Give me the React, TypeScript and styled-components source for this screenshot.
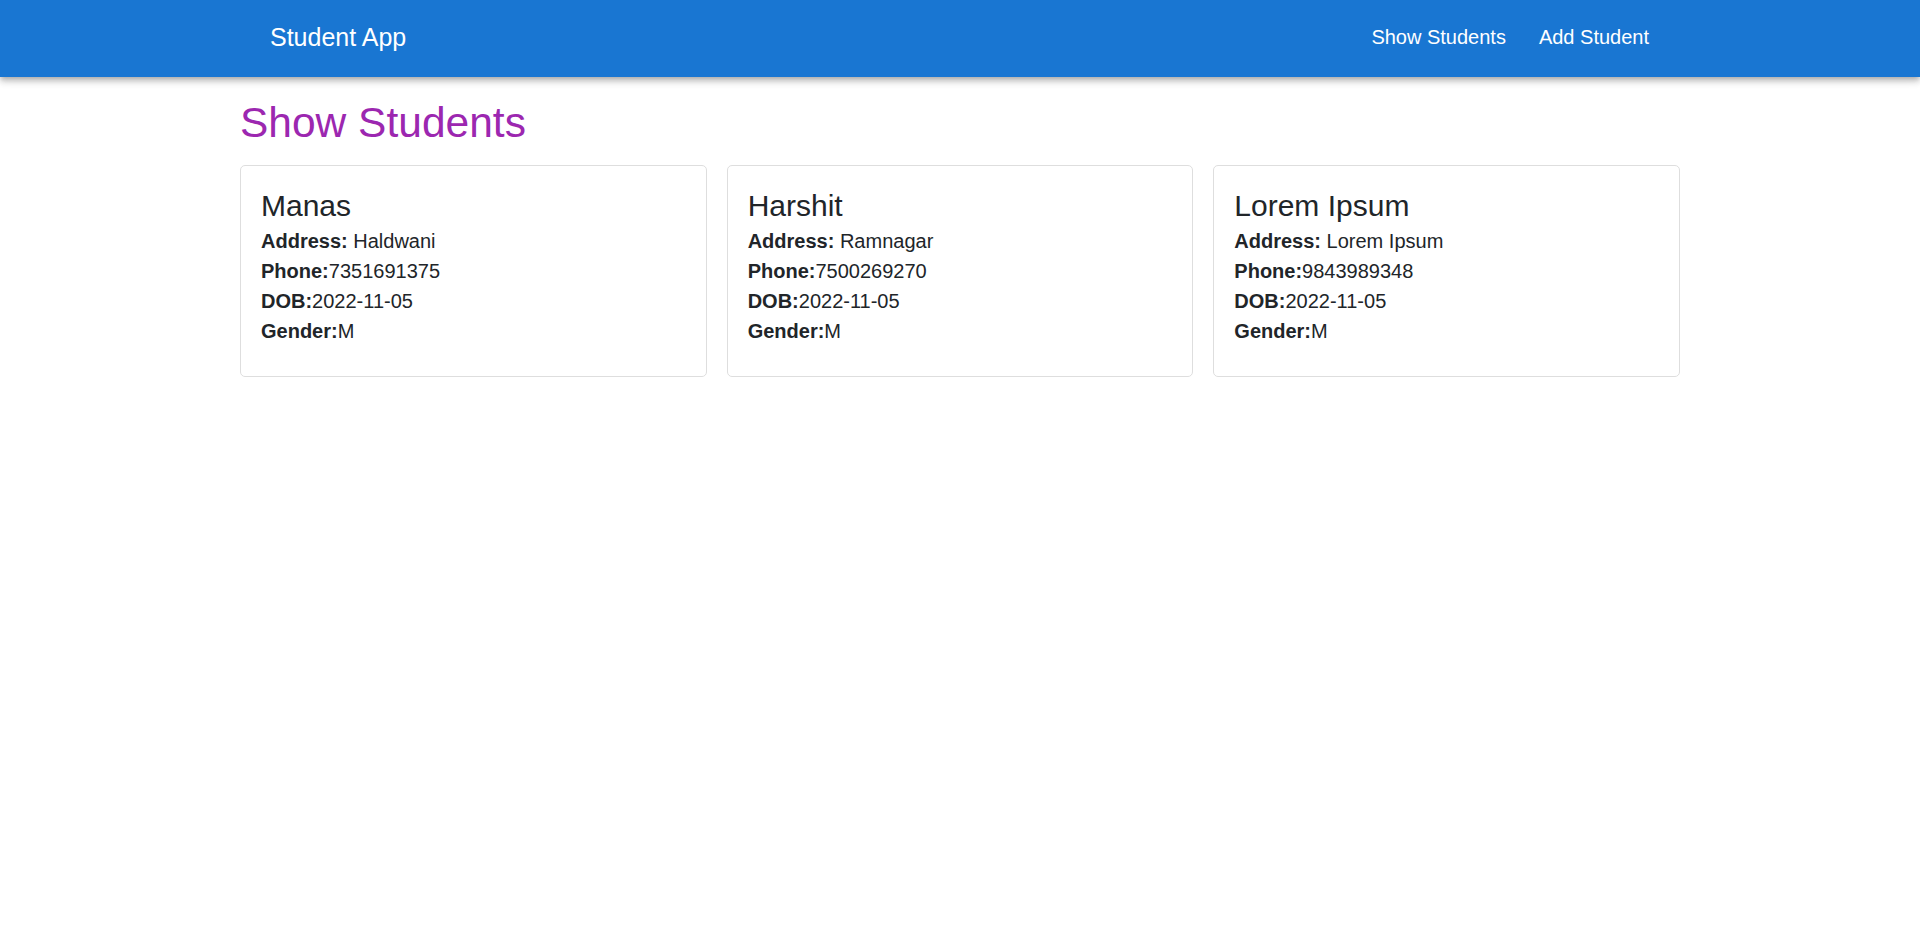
import React from "react";
import styled, { createGlobalStyle } from "styled-components";

/*
学生一覧ページ。
上部のナビバーと、学生ごとのカードを3列で並べる。
*/
const GlobalStyle = createGlobalStyle`
  body {
    margin: 0;
    background-color: #ffffff;
    font-family: "Liberation Sans", Arial, sans-serif;
    color: #212529;
  }
`;

export const NavBar = styled.header`
  height: 77px;
  background-color: #1976d2;
  box-shadow: 0px 2px 5px -1px rgba(0, 0, 0, 0.2),
    0px 5px 6px 0px rgba(0, 0, 0, 0.14), 0px 1px 12px 0px rgba(0, 0, 0, 0.12);
  color: #ffffff;
`;

export const NavInner = styled.div`
  width: 1440px;
  height: 100%;
  margin: 0 auto;
  padding: 0 31px 3px 30px;
  box-sizing: border-box;
  display: flex;
  align-items: center;
  justify-content: space-between;
`;

export const Brand = styled.div`
  font-size: 25px;
  line-height: 1;
`;

export const NavLinks = styled.nav`
  display: flex;
  gap: 33px;
`;

export const NavLink = styled.a`
  font-size: 20px;
  line-height: 1;
  color: #ffffff;
  text-decoration: none;
  cursor: pointer;
`;

export const Main = styled.main`
  width: 1440px;
  margin: 0 auto;
  padding-top: 20px;
`;

export const PageTitle = styled.h1`
  margin: 0 0 15px;
  font-size: 42.5px;
  line-height: 52.5px;
  font-weight: 400;
  color: #9c27b0;
`;

export const Grid = styled.div`
  display: grid;
  grid-template-columns: repeat(3, 1fr);
  gap: 20px;
`;

export const Card = styled.div`
  border: 1px solid #dedede;
  border-radius: 5px;
  padding: 22px 20px 30px;
`;

export const CardTitle = styled.h4`
  margin: 0 0 2px;
  font-size: 30px;
  line-height: 36px;
  font-weight: 400;
`;

export const Field = styled.div`
  font-size: 20px;
  line-height: 30px;

  b {
    font-weight: 700;
  }
`;

type Student = {
  name: string;
  address: string;
  phone: string;
  dob: string;
  gender: string;
};

const students: Student[] = [
  { name: "Manas", address: "Haldwani", phone: "7351691375", dob: "2022-11-05", gender: "M" },
  { name: "Harshit", address: "Ramnagar", phone: "7500269270", dob: "2022-11-05", gender: "M" },
  { name: "Lorem Ipsum", address: "Lorem Ipsum", phone: "9843989348", dob: "2022-11-05", gender: "M" },
];

export default function App() {
  return (
    <>
      <GlobalStyle />
      <NavBar>
        <NavInner>
          <Brand>Student App</Brand>
          <NavLinks>
            <NavLink>Show Students</NavLink>
            <NavLink>Add Student</NavLink>
          </NavLinks>
        </NavInner>
      </NavBar>
      <Main>
        <PageTitle>Show Students</PageTitle>
        <Grid>
          {students.map((s) => (
            <Card key={s.phone}>
              <CardTitle>{s.name}</CardTitle>
              <Field>
                <b>Address:</b> {s.address}
              </Field>
              <Field>
                <b>Phone:</b>
                {s.phone}
              </Field>
              <Field>
                <b>DOB:</b>
                {s.dob}
              </Field>
              <Field>
                <b>Gender:</b>
                {s.gender}
              </Field>
            </Card>
          ))}
        </Grid>
      </Main>
    </>
  );
}
